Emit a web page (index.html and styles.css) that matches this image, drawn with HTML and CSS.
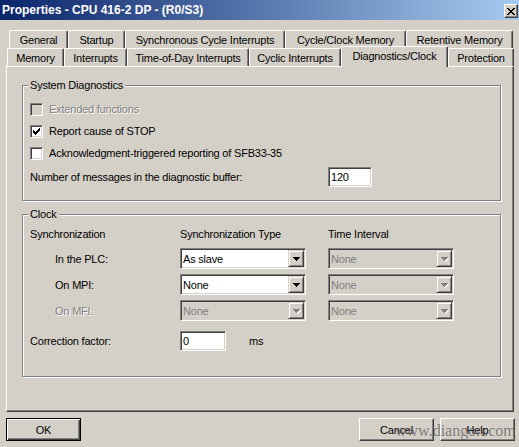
FILE: index.html
```html
<!DOCTYPE html>
<html>
<head>
<meta charset="utf-8">
<title>Properties - CPU 416-2 DP - (R0/S3)</title>
<link rel="stylesheet" href="styles.css">
</head>
<body>
<div class="window">
  <div class="titlebar">
    <span class="title">Properties - CPU 416-2 DP - (R0/S3)</span>
    <span class="close"><svg width="8" height="7" viewBox="0 0 8 7" shape-rendering="crispEdges"><path fill="#000" d="M0 0h2v1H0zM6 0h2v1H6zM1 1h2v1H1zM5 1h2v1H5zM2 2h4v1H2zM3 3h2v1H3zM2 4h4v1H2zM1 5h2v1H1zM5 5h2v1H5zM0 6h2v1H0zM6 6h2v1H6z"/></svg></span>
  </div>

  <div class="tabs">
    <div class="tabrow row1">
      <div class="tab">General</div>
      <div class="tab">Startup</div>
      <div class="tab">Synchronous Cycle Interrupts</div>
      <div class="tab">Cycle/Clock Memory</div>
      <div class="tab">Retentive Memory</div>
    </div>
    <div class="tabrow row2">
      <div class="tab">Memory</div>
      <div class="tab">Interrupts</div>
      <div class="tab">Time-of-Day Interrupts</div>
      <div class="tab">Cyclic Interrupts</div>
      <div class="tab sel">Diagnostics/Clock</div>
      <div class="tab">Protection</div>
    </div>
  </div>

  <div class="panel">
    <div class="group sys">
      <div class="gtitle">System Diagnostics</div>
      <div class="sysbody">
        <div class="crow disabled"><span class="cb"></span><span class="lbl">Extended functions</span></div>
        <div class="crow"><span class="cb"><svg width="7" height="7" viewBox="0 0 7 7" shape-rendering="crispEdges"><path fill="#000" d="M6 0h1v1H6zM5 1h2v1H5zM0 2h1v1H0zM4 2h3v1H4zM0 3h2v1H0zM3 3h3v1H3zM0 4h5v1H0zM1 5h3v1H1zM2 6h1v1H2z"/></svg></span><span class="lbl">Report cause of STOP</span></div>
        <div class="crow"><span class="cb"></span><span class="lbl">Acknowledgment-triggered reporting of SFB33-35</span></div>
        <div class="nrow"><span class="lbl">Number of messages in the diagnostic buffer:</span><span class="edit num">120</span></div>
      </div>
    </div>

    <div class="group clock">
      <div class="gtitle">Clock</div>
      <div class="clockgrid">
        <div class="hdr">Synchronization</div>
        <div class="hdr">Synchronization Type</div>
        <div class="hdr">Time Interval</div>

        <div class="rlabel">In the PLC:</div>
        <div class="combo"><span class="val">As slave</span><span class="dd"><svg width="7" height="4" viewBox="0 0 7 4" shape-rendering="crispEdges"><path fill="#000" d="M0 0h7v1H0zM1 1h5v1H1zM2 2h3v1H2zM3 3h1v1H3z"/></svg></span></div>
        <div class="combo disabled"><span class="val">None</span><span class="dd"><svg width="8" height="5" viewBox="0 0 8 5" shape-rendering="crispEdges"><path fill="#fff" d="M1 1h7v1H1zM2 2h5v1H2zM3 3h3v1H3zM4 4h1v1H4z"/><path fill="#808080" d="M0 0h7v1H0zM1 1h5v1H1zM2 2h3v1H2zM3 3h1v1H3z"/></svg></span></div>

        <div class="rlabel">On MPI:</div>
        <div class="combo"><span class="val">None</span><span class="dd"><svg width="7" height="4" viewBox="0 0 7 4" shape-rendering="crispEdges"><path fill="#000" d="M0 0h7v1H0zM1 1h5v1H1zM2 2h3v1H2zM3 3h1v1H3z"/></svg></span></div>
        <div class="combo disabled"><span class="val">None</span><span class="dd"><svg width="8" height="5" viewBox="0 0 8 5" shape-rendering="crispEdges"><path fill="#fff" d="M1 1h7v1H1zM2 2h5v1H2zM3 3h3v1H3zM4 4h1v1H4z"/><path fill="#808080" d="M0 0h7v1H0zM1 1h5v1H1zM2 2h3v1H2zM3 3h1v1H3z"/></svg></span></div>

        <div class="rlabel disabled">On MFI:</div>
        <div class="combo disabled"><span class="val">None</span><span class="dd"><svg width="8" height="5" viewBox="0 0 8 5" shape-rendering="crispEdges"><path fill="#fff" d="M1 1h7v1H1zM2 2h5v1H2zM3 3h3v1H3zM4 4h1v1H4z"/><path fill="#808080" d="M0 0h7v1H0zM1 1h5v1H1zM2 2h3v1H2zM3 3h1v1H3z"/></svg></span></div>
        <div class="combo disabled"><span class="val">None</span><span class="dd"><svg width="8" height="5" viewBox="0 0 8 5" shape-rendering="crispEdges"><path fill="#fff" d="M1 1h7v1H1zM2 2h5v1H2zM3 3h3v1H3zM4 4h1v1H4z"/><path fill="#808080" d="M0 0h7v1H0zM1 1h5v1H1zM2 2h3v1H2zM3 3h1v1H3z"/></svg></span></div>
      </div>
      <div class="corr"><span class="corrlabel">Correction factor:</span><span class="edit corredit">0</span><span class="ms">ms</span></div>
    </div>
  </div>

  <div class="buttons">
    <div class="btn ok">OK</div>
    <div class="btn">Cancel</div>
    <div class="btn">Help</div>
  </div>

  <div class="watermark">www.diangon.com</div>
</div>
</body>
</html>
```

FILE: styles.css
```css
* { box-sizing: border-box; }

body {
  margin: 0;
  background: #d4d0c8;
}

.window {
  position: relative;
  width: 519px;
  height: 447px;
  overflow: hidden;
  background: #d4d0c8;
  font-family: "Liberation Sans", Arial, sans-serif;
  font-size: 11px;
  letter-spacing: -0.2px;
  color: #000;
  display: flex;
  flex-direction: column;
}

/* title bar */
.titlebar {
  flex: none;
  height: 20px;
  display: flex;
  align-items: flex-start;
  justify-content: space-between;
  padding: 0 1px 0 2px;
  background: linear-gradient(to right, #0a246a, #a6caf0);
}

.title {
  color: #fff;
  font-weight: bold;
  font-size: 12px;
  letter-spacing: 0;
  line-height: 20px;
  white-space: nowrap;
}

.close {
  margin-top: 4px;
  width: 14px;
  height: 14px;
  display: flex;
  align-items: center;
  justify-content: center;
  background: #d4d0c8;
  border-top: 1px solid #fff;
  border-left: 1px solid #fff;
  border-right: 1px solid #404040;
  border-bottom: 1px solid #404040;
  box-shadow: inset -1px -1px #808080;
}

/* tabs */
.tabs {
  flex: none;
  margin-top: 10px;
}

.tabrow {
  display: flex;
  height: 18px;
  align-items: flex-start;
}

.row1 { padding-left: 9px; }
.row2 { padding-left: 7px; position: relative; z-index: 1; }

.tab {
  flex: none;
  height: 18px;
  padding-top: 2px;
  line-height: 14px;
  text-align: center;
  white-space: nowrap;
  background: #d4d0c8;
  border-top: 1px solid #fff;
  border-left: 1px solid #fff;
  border-right: 1px solid #404040;
  box-shadow: inset -1px 0 #808080;
  border-radius: 2px 2px 0 0;
}

.tab.sel {
  height: 21px;
  margin-top: -2px;
  position: relative;
  z-index: 2;
}

.row1 .tab:nth-child(1) { width: 59px; }
.row1 .tab:nth-child(2) { width: 57px; }
.row1 .tab:nth-child(3) { width: 160px; }
.row1 .tab:nth-child(4) { width: 121px; }
.row1 .tab:nth-child(5) { width: 107px; }

.row2 .tab:nth-child(1) { width: 57px; }
.row2 .tab:nth-child(2) { width: 63px; }
.row2 .tab:nth-child(3) { width: 122px; }
.row2 .tab:nth-child(4) { width: 92px; }
.row2 .tab:nth-child(5) { width: 107px; }
.row2 .tab:nth-child(6) { width: 66px; }

/* panel */
.panel {
  flex: none;
  margin-left: 6px;
  width: 508px;
  height: 346px;
  padding: 18px 0 0 15px;
  border-top: 1px solid #fff;
  border-left: 1px solid #fff;
  border-right: 1px solid #404040;
  border-bottom: 1px solid #404040;
  box-shadow: inset -1px -1px #808080;
}

.group {
  width: 479px;
  border: 1px solid #808080;
  box-shadow: 1px 1px #fff, inset 1px 1px #fff;
  padding: 0 0 0 7px;
}

.gtitle {
  width: max-content;
  height: 13px;
  line-height: 13px;
  margin: -7px 0 0 -2px;
  padding: 0 2px;
  background: #d4d0c8;
}

.sysbody {
  padding: 6px 0 12px 0;
}

.crow {
  display: flex;
  align-items: center;
  height: 22px;
}

.cb {
  flex: none;
  width: 13px;
  height: 13px;
  margin-right: 6px;
  display: flex;
  align-items: center;
  justify-content: center;
  background: #fff;
  border-top: 1px solid #808080;
  border-left: 1px solid #808080;
  border-right: 1px solid #fff;
  border-bottom: 1px solid #fff;
  box-shadow: inset 1px 1px #404040, inset -1px -1px #d4d0c8;
}

.disabled .cb { background: #d4d0c8; }

.disabled .lbl,
.rlabel.disabled {
  color: #808080;
  text-shadow: 1px 1px #fff;
}

.nrow {
  display: grid;
  grid-template-columns: 298px auto;
  align-items: center;
  height: 22px;
  margin-top: 2px;
}

.edit {
  height: 20px;
  display: flex;
  align-items: center;
  padding-left: 2px;
  background: #fff;
  border-top: 1px solid #808080;
  border-left: 1px solid #808080;
  border-right: 1px solid #fff;
  border-bottom: 1px solid #fff;
  box-shadow: inset 1px 1px #404040, inset -1px -1px #d4d0c8;
}

.num { width: 44px; }

/* clock */
.clock {
  margin-top: 13px;
  padding-bottom: 25px;
}

.clockgrid {
  display: grid;
  grid-template-columns: 150px 148px 126px;
  grid-template-rows: 16px 21px 21px 21px;
  row-gap: 5px;
  margin-top: 6px;
  align-items: center;
}

.hdr {
  align-self: start;
  line-height: 14px;
}

.rlabel {
  padding-left: 25px;
}

.combo {
  width: 126px;
  height: 21px;
  display: flex;
  padding: 1px;
  background: #fff;
  border-top: 1px solid #808080;
  border-left: 1px solid #808080;
  border-right: 1px solid #fff;
  border-bottom: 1px solid #fff;
  box-shadow: inset 1px 1px #404040, inset -1px -1px #d4d0c8;
}

.combo.disabled {
  background: #d4d0c8;
  color: #808080;
}

.val {
  flex: 1;
  display: flex;
  align-items: center;
  padding-left: 1px;
  white-space: nowrap;
}

.dd {
  flex: none;
  width: 16px;
  display: flex;
  align-items: center;
  justify-content: center;
  background: #d4d0c8;
  border-top: 1px solid #d4d0c8;
  border-left: 1px solid #d4d0c8;
  border-right: 1px solid #404040;
  border-bottom: 1px solid #404040;
  box-shadow: inset 1px 1px #fff, inset -1px -1px #808080;
}

.combo.disabled .dd svg { margin: 1px 0 0 1px; }

.corr {
  display: flex;
  align-items: center;
  height: 20px;
  margin-top: 10px;
}

.corrlabel { width: 150px; flex: none; }
.corredit { width: 46px; flex: none; }
.ms { margin-left: 23px; }

/* buttons */
.buttons {
  flex: none;
  display: flex;
  gap: 6px;
  margin-top: 6px;
  padding: 0 4px 0 6px;
}

.btn {
  width: 75px;
  height: 23px;
  display: flex;
  align-items: center;
  justify-content: center;
  border-top: 1px solid #fff;
  border-left: 1px solid #fff;
  border-right: 1px solid #404040;
  border-bottom: 1px solid #404040;
  box-shadow: inset -1px -1px #808080;
}

.btn.ok {
  margin-right: auto;
  border: 1px solid #000;
  box-shadow: inset 1px 1px #fff, inset -1px -1px #404040, inset -2px -2px #808080;
}

.watermark {
  position: absolute;
  left: 395px;
  top: 422px;
  font-family: "Liberation Serif", "Times New Roman", serif;
  font-size: 16px;
  letter-spacing: 0;
  color: rgba(95, 95, 95, 0.75);
  white-space: nowrap;
}
```
